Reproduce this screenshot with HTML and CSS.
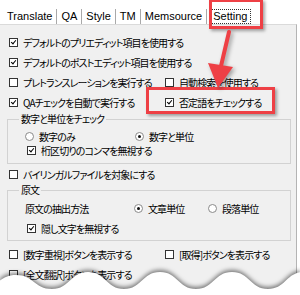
FILE: index.html
```html
<!DOCTYPE html>
<html lang="ja">
<head>
    <meta charset="UTF-8">
    <title>Setting</title>
    <link rel="stylesheet" href="styles.css">
</head>
<body>
    <div class="window">
        <div class="tabs">
            <span class="tab">Translate</span>
            <span class="tab">QA</span>
            <span class="tab">Style</span>
            <span class="tab">TM</span>
            <span class="tab">Memsource</span>
            <span class="tab active"><span class="focus">Setting</span></span>
        </div>

        <div class="panel">
            <div class="row">
                <span class="opt"><span class="cb on"></span>デフォルトのプリエディット項目を使用する</span>
            </div>
            <div class="row">
                <span class="opt"><span class="cb on"></span>デフォルトのポストエディット項目を使用する</span>
            </div>
            <div class="row">
                <span class="opt col"><span class="cb"></span>プレトランスレーションを実行する</span>
                <span class="opt"><span class="cb"></span>自動検索を使用する</span>
            </div>
            <div class="row">
                <span class="opt col"><span class="cb on"></span>QAチェックを自動で実行する</span>
                <span class="opt"><span class="cb on"></span>否定語をチェックする</span>
            </div>

            <fieldset class="group first">
                <legend>数字と単位をチェック</legend>
                <div class="line">
                    <span class="opt w110"><span class="rb"></span>数字のみ</span>
                    <span class="opt"><span class="rb on"></span>数字と単位</span>
                </div>
                <div class="line">
                    <span class="opt nudge"><span class="cb on"></span>桁区切りのコンマを無視する</span>
                </div>
            </fieldset>

            <div class="row">
                <span class="opt"><span class="cb"></span>バイリンガルファイルを対象にする</span>
            </div>

            <fieldset class="group second">
                <legend>原文</legend>
                <div class="line tall">
                    <span class="label">原文の抽出方法</span>
                    <span class="opt w74"><span class="rb on"></span>文章単位</span>
                    <span class="opt"><span class="rb"></span>段落単位</span>
                </div>
                <div class="line tall">
                    <span class="opt nudge"><span class="cb on"></span>隠し文字を無視する</span>
                </div>
            </fieldset>

            <div class="row gap">
                <span class="opt col"><span class="cb"></span>[数字重視]ボタンを表示する</span>
                <span class="opt"><span class="cb"></span>[取得]ボタンを表示する</span>
            </div>
            <div class="row">
                <span class="opt col"><span class="cb"></span>[全文翻訳]ボタンを表示する</span>
            </div>
        </div>

        <!-- annotations laid over the screenshot -->
        <div class="mark mark-tab"></div>
        <div class="mark mark-neg"></div>
        <svg class="arrow" width="300" height="295" viewBox="0 0 300 295">
            <line x1="229" y1="32" x2="221" y2="66" stroke="#ee4045" stroke-width="4" stroke-linecap="round"/>
            <polygon points="218,88 208,63 233,67" fill="#ee4045"/>
        </svg>
        <svg class="torn" width="300" height="33" viewBox="0 0 300 33">
            <path d="M -20 27 C -2 27 -2 13 16 13 C 34 13 34 27 52 27 C 70 27 70 10 88 10 C 106 10 106 27 124 27 C 142 27 142 10 160 10 C 178 10 178 27 196 27 C 214 27 214 10 232 10 C 250 10 250 27 268 27 C 286 27 286 10 304 10 L 304 40 L -20 40 Z" fill="#fff"/>
        </svg>
    </div>
</body>
</html>
```

FILE: styles.css
```css
/* Page */
body {
    margin: 0;
    background: #fff;
}

.window {
    position: relative;
    width: 300px;
    height: 295px;
    overflow: hidden;
    font-family: "Noto Sans CJK JP", "Liberation Sans", sans-serif;
    font-size: 10px;
    font-feature-settings: "palt";
    letter-spacing: -0.9px;
    color: #000;
}

/* Tab strip */
.tabs {
    display: flex;
    align-items: flex-end;
    height: 24px;
    padding-left: 3px;
}

.tab {
    height: 15px;
    line-height: 15px;
    padding: 0 4px;
    border-right: 1px solid #a9a9a9;
    font-family: "Liberation Sans", Arial, sans-serif;
    font-size: 11px;
    letter-spacing: 0;
    color: #000;
}

.tab.active {
    border-right: none;
    padding-left: 2px;
}

.focus {
    display: inline-block;
    line-height: 13px;
    padding: 0 3px;
    border: 1px dotted #333;
}

/* Settings panel */
.panel {
    width: 296px;
    height: 270px;
    padding-top: 7px;
    background: #f0f0f0;
    border-top: 1px solid #dadada;
    border-right: 1px solid #b4b4b4;
}

.row {
    display: flex;
    align-items: center;
    height: 20px;
    padding-left: 9px;
}

.row.gap {
    margin-top: 3px;
}

.opt {
    display: flex;
    align-items: center;
    white-space: nowrap;
}

.col {
    width: 156px;
}

.w110 {
    width: 110px;
}

.w74 {
    width: 74px;
}

.nudge {
    margin-left: 2px;
}

.label {
    width: 109px;
}

/* Check boxes and radio buttons */
.cb, .rb {
    position: relative;
    flex: none;
    width: 7px;
    height: 7px;
    margin-right: 5px;
    background: #fff;
    border: 1px solid #333;
}

.rb {
    border-color: #8a8a8a;
    border-radius: 50%;
}

.cb.on::after {
    content: "";
    position: absolute;
    left: 2px;
    top: 0;
    width: 2px;
    height: 4px;
    border-right: 1.6px solid #000;
    border-bottom: 1.6px solid #000;
    transform: rotate(40deg);
}

.rb.on::after {
    content: "";
    position: absolute;
    left: 2px;
    top: 2px;
    width: 3px;
    height: 3px;
    border-radius: 50%;
    background: #111;
}

/* Group boxes */
.group {
    min-width: 0;
    margin: 0 5px 0 7px;
    padding: 4px 0 6px 0;
    border: 1px solid #d2d2d2;
}

.group.first {
    margin-top: 1px;
}

.group.second {
    padding-bottom: 4px;
}

.group legend {
    margin-left: 11px;
    padding: 0 2px;
    line-height: 12px;
}

.line {
    display: flex;
    align-items: center;
    height: 14px;
    padding-left: 17px;
}

.line.tall {
    height: 16px;
}

.line.tall + .line.tall {
    margin-top: 4px;
}

/* Red annotations */
.mark {
    position: absolute;
    box-sizing: border-box;
    border: 3px solid #ee4045;
    box-shadow: 2px 2px 3px rgba(0, 0, 0, 0.35);
}

.mark-tab {
    left: 209px;
    top: -1px;
    width: 54px;
    height: 30px;
}

.mark-neg {
    left: 146px;
    top: 87px;
    width: 129px;
    height: 27px;
}

.arrow {
    position: absolute;
    left: 0;
    top: 0;
    filter: drop-shadow(2px 2px 2px rgba(0, 0, 0, 0.35));
}

/* Torn paper edge */
.torn {
    position: absolute;
    left: 0;
    bottom: 0;
    filter: drop-shadow(0 -2px 2px rgba(0, 0, 0, 0.5));
}
```
